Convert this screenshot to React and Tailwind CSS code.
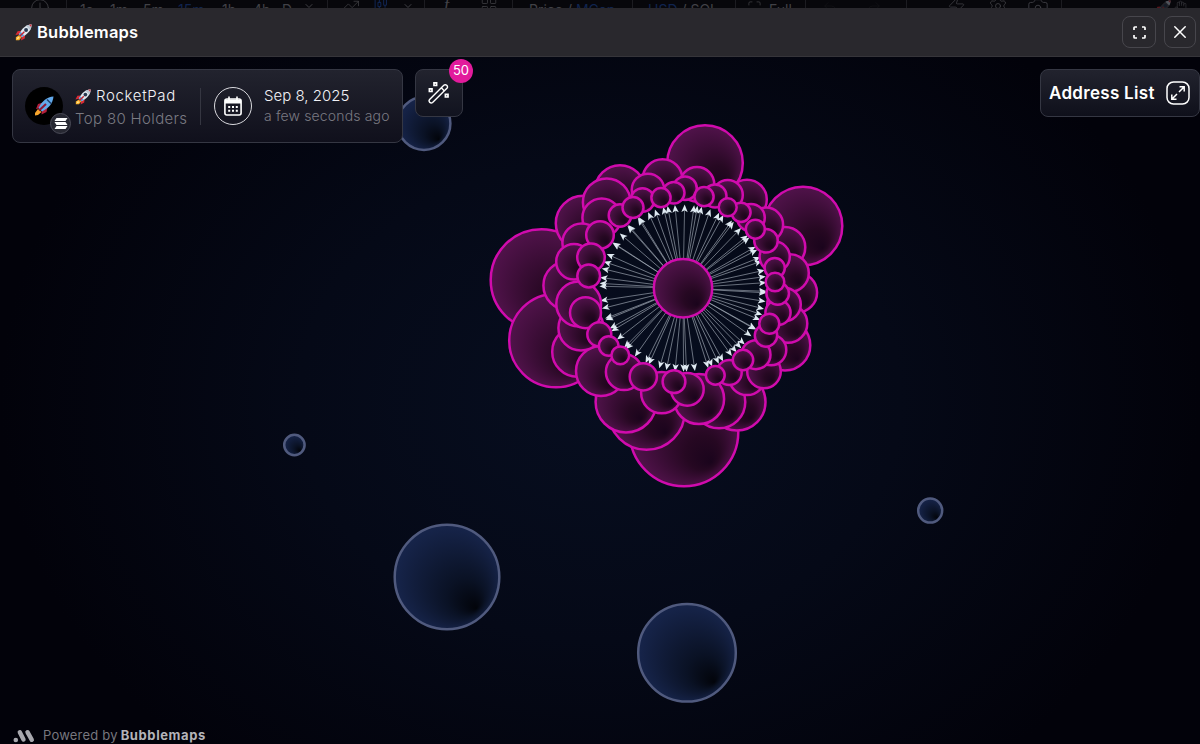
import React from "react";
import { Clock, ChevronDown, Undo2, Redo2, Settings, Camera, Zap, Maximize, LayoutGrid, ChartCandlestick, TrendingUp, Hand } from "lucide-react";

const HUB = { x: 683, y: 288.2, r: 29.2 };
const RING = 83.6;

// Each holder: [centre x, centre y, radius]
const HOLDERS = [
  [541.5, 280, 51], [556, 340.5, 47], [705, 163, 38], [803, 226, 39.5], [684, 432, 54.5],
  [620, 190, 25], [606.7, 202.3, 24], [583.3, 223.3, 27.7], [601.7, 217.7, 19.5], [600, 235, 14],
  [620, 215.5, 11.5], [633, 207.5, 10.7], [642.5, 200, 12], [648, 190, 16.5], [662.5, 179, 20],
  [661, 197.7, 9.8], [673.7, 192.7, 11], [685, 188.3, 12], [697, 184.3, 17.5], [704, 196.7, 9.8],
  [715, 196, 11.7], [727.7, 195, 15.3], [747, 199.5, 20], [727.7, 207.2, 9.2], [741, 212.3, 9.8],
  [751, 217.7, 14], [766, 224.7, 17.3], [755.3, 229.2, 9.7], [766, 240.7, 12], [785, 247.3, 20.5],
  [774.7, 256.7, 15.3], [790, 273, 19], [774.7, 268, 10.3], [775, 282, 9.5], [797, 292.5, 20.3],
  [777.7, 293.5, 11.5], [784, 304.5, 17], [778, 312.5, 12.8], [788, 323.5, 19.5], [785, 345.3, 25.5],
  [769.3, 323.7, 10.2], [766, 335.5, 11.4], [771, 350, 15.5], [756, 354.7, 14.7], [743, 360, 10.4],
  [764, 371.5, 17], [747, 377, 18.3], [729.3, 372.5, 12.6], [715.3, 375.3, 9.6], [737, 402, 28.7],
  [719, 402, 26.5], [699, 399, 25.3], [687.3, 389.3, 16.6], [674, 381.7, 11.6], [661.7, 392.7, 20.8],
  [643.3, 376.8, 13.8], [624, 372, 18.3], [601, 371, 25.2], [626, 402, 30.6], [646.5, 411.5, 38.5],
  [620.3, 355.3, 9.1], [608.7, 346, 10], [599.3, 334.3, 12.2], [585.5, 312.7, 15.7], [577.3, 351.7, 25.3],
  [581, 328, 22.8], [578.7, 304, 22.6], [568, 285.5, 24.8], [588.7, 276, 11.6], [591, 257.3, 14],
  [574, 261.7, 18], [581.7, 242.7, 19.5],
].sort((a, b) => b[2] - a[2]);

const LOOSE = [
  [424, 123.5, 26.8], [447, 577, 52.7], [687, 652.8, 49.2], [930.2, 510.6, 12.4], [294.4, 445, 10.6],
];

function BubbleGraph() {
  return (
    <svg className="absolute inset-0" width="1200" height="687" viewBox="0 57 1200 687">
      <defs>
        <radialGradient id="pink" cx=".5" cy=".5" r=".52" fx=".75" fy=".78">
          <stop offset="0" stopColor="#1a041c" />
          <stop offset=".3" stopColor="#260822" />
          <stop offset="1" stopColor="#52134c" />
        </radialGradient>
        <radialGradient id="blue" cx=".5" cy=".5" r=".52" fx=".78" fy=".8">
          <stop offset="0" stopColor="#02040a" />
          <stop offset=".35" stopColor="#0a1225" />
          <stop offset="1" stopColor="#17254c" />
        </radialGradient>
      </defs>
      {LOOSE.map(([x, y, r]) => (
        <circle key={x} cx={x} cy={y} r={r - 0.4} fill="url(#blue)" stroke="#505a7e" strokeWidth="2.5" />
      ))}
      {HOLDERS.map(([x, y], i) => {
        const deg = (Math.atan2(y - HUB.y, x - HUB.x) * 180) / Math.PI;
        return (
          <g key={i} transform={`translate(${HUB.x} ${HUB.y}) rotate(${deg})`}>
            <line x1="28" y1="0" x2={RING - 5} y2="0" stroke="#b0b9c4" strokeOpacity=".65" strokeWidth=".85" />
            <path d={`M${RING} 0 l-7.500 -3.200 l1.800 3.200 l-1.800 3.200z`} fill="#dfeaf2" />
          </g>
        );
      })}
      {HOLDERS.map(([x, y, r], i) => (
        <circle key={i} cx={x} cy={y} r={r - 0.2} fill="url(#pink)" stroke="#d00bad" strokeWidth="2.5" />
      ))}
      <circle cx={HUB.x} cy={HUB.y} r={HUB.r} fill="url(#pink)" stroke="#d00bad" strokeWidth="2.500" />
    </svg>
  );
}

function Rocket({ className, body = "#dfe7ee" }) {
  return (
    <svg className={className} viewBox="0 0 20 20">
      <path d="M7 8 3 8.5.5 13 6 12z" fill="#d92b35" />
      <path d="M12 13 11.5 17 7 19.5 8 14z" fill="#d92b35" />
      <path d="M5 13 1 15.5 1 19 5 19 8 15z" fill="#f9b02c" />
      <path d="M3.5 15 2 18 5.5 16.5z" fill="#fff0a0" />
      <path d="M19.5.5C13 .5 8 5 4.800 12L8 15.200C15 12 19.500 7 19.500.5z" fill={body} />
      <path d="M19.500.5C16.500.5 14.500 1.200 13 2.200L17.800 7C19 5 19.500 3 19.500.5z" fill="#b9c6d2" />
      <path d="M19.500.5 16.500 1 19 3.500z" fill="#d92b35" />
      <path d="M4.800 12 6.500 9 11 13.500 8 15.200z" fill="#5b9fe0" />
      <circle cx="13" cy="7" r="2.300" fill="#28384f" />
      <path d="M5.500 14.500 11 9" stroke="#c4242f" strokeWidth="1.700" />
    </svg>
  );
}

function TokenRocket({ className }) {
  return (
    <svg className={className} viewBox="0 0 20 20">
      <path d="M9 6.500 4 8 2 13 7 12z" fill="#b51f3b" />
      <path d="M13.500 11 12.500 16 7.500 18.500 8 13z" fill="#b51f3b" />
      <path d="M4 13 1 17 1 19.500 4 19 7.500 16z" fill="#f7a52c" />
      <path d="M19.500.5C13 1 8 5 4.500 12L8 15.500C15 12 19 7 19.500.5z" fill="#62a9ea" />
      <path d="M13 3.500 17 7.500" stroke="#1f3d66" strokeWidth="1.500" />
      <path d="M5 14.500 12 8" stroke="#8f1736" strokeWidth="2" />
    </svg>
  );
}

function Sep() {
  return <span className="block h-4 w-px bg-[#1c1c21]" />;
}

// Toolbar cells, each with the width up to the next one
const TOOLS = [
  ["w-[36px]", <Clock size={20} strokeWidth={1} className="-mt-0.5" />],
  ["w-[14px]", <Sep />],
  ["w-[30px]", "1s"],
  ["w-[33px]", "1m"],
  ["w-[35px]", "5m"],
  ["w-[44px] text-[#10244f]", "15m"],
  ["w-[31px]", "1h"],
  ["w-[29px]", "4h"],
  ["w-[21px]", "D"],
  ["w-[24px]", <ChevronDown size={12} />],
  ["w-[15px]", <Sep />],
  ["w-[31px]", <TrendingUp size={18} strokeWidth={1} className="-mt-1" />],
  ["w-[29px] text-[#10244f]", <ChartCandlestick size={17} strokeWidth={1.500} className="-mt-1" />],
  ["w-[22px]", <ChevronDown size={12} />],
  ["w-[20px]", <Sep />],
  ["w-[36px]", <span className="block -mt-1 font-['Liberation_Serif',serif] text-lg leading-[18px] italic">f</span>],
  ["w-[32px]", <LayoutGrid size={18} strokeWidth={1} className="-mt-1" />],
  ["w-[17px]", <Sep />],
  ["w-[103px]", <>Price / <span className="text-[#10244f]">MCap</span></>],
  ["w-[16px]", <Sep />],
  ["w-[87px]", <><span className="text-[#10244f]">USD</span> / SOL</>],
  ["w-[12px]", <Sep />],
  ["w-[22px]", <Maximize size={15} strokeWidth={1.200} />],
  ["w-[36px]", "Full"],
  ["w-[17px]", <Sep />],
  ["w-[44px] text-[#131317]", <Undo2 size={16} strokeWidth={1} />],
  ["w-[40px] text-[#131317]", <Redo2 size={16} strokeWidth={1} />],
  ["w-[41px]", <Sep />],
  ["w-[41px]", <Zap size={19} strokeWidth={1} className="-mt-1" />],
  ["w-[39px]", <Settings size={20} strokeWidth={1} className="-mt-1" />],
  ["w-[34px]", <Camera size={22} strokeWidth={1} className="-mt-1" />],
  ["w-[94px]", <Sep />],
  ["w-[19px]", <Rocket className="size-4 opacity-40" body="#4a4a50" />],
  ["w-[20px]", <Hand size={13} strokeWidth={1} />],
];

function Toolbar() {
  return (
    <div className="flex h-2 shrink-0 items-start overflow-hidden bg-[#07070b] pl-[30px] text-[#414146]">
      {TOOLS.map(([cls, item], i) => (
        <div key={i} className={`${cls} h-4 shrink-0 whitespace-nowrap text-sm leading-[19px]`}>{item}</div>
      ))}
    </div>
  );
}

function Header() {
  return (
    <header className="flex h-[49px] shrink-0 items-center border-b border-[#36353a] bg-[#29282d] pr-1 pl-[15px]">
      <Rocket className="size-[17px]" />
      <h1 className="ml-[5px] text-[16.500px] font-semibold tracking-[0.2px] text-white">Bubblemaps</h1>
      <div className="ml-auto flex gap-2">
        <button className="flex h-8 w-[34px] items-center justify-center rounded-lg border border-[#47464c] text-white">
          <svg className="size-[13px]" viewBox="0 0 13 13" fill="none" stroke="currentColor" strokeWidth="1.700">
            <path d="M1 4V1.800Q1 1 1.800 1H4M9 1h2.200Q12 1 12 1.800V4M12 9v2.200q0 .8-.8.8H9M4 12H1.800Q1 12 1 11.200V9" />
          </svg>
        </button>
        <button className="flex size-8 items-center justify-center rounded-lg border border-[#47464c] text-white">
          <svg className="size-3" viewBox="0 0 12 12" fill="none" stroke="currentColor" strokeWidth="1.500" strokeLinecap="round">
            <path d="M.8.8 11.200 11.200M11.200.8.8 11.200" />
          </svg>
        </button>
      </div>
    </header>
  );
}

function TokenCard() {
  return (
    <section className="flex h-[74px] w-[391px] shrink-0 items-center rounded-lg border border-[#353743] bg-linear-to-b from-[#22232e] to-[#10101c] pl-3">
      <div className="relative size-[38px] shrink-0 rounded-full bg-black">
        <TokenRocket className="absolute top-[9px] left-[9px] size-5" />
        <span className="absolute top-[26px] left-[25px] flex size-[21px] items-center justify-center rounded-full border border-[#4a4b57] bg-[#272832]">
          <svg className="h-[11px] w-[14px]" viewBox="0 0 14 11" fill="#fff">
            <path d="M2.500 0H13.500L11.500 3H.5zM.5 4H11.500L13.500 7H2.500zM2.500 8H13.500L11.500 11H.5z" />
          </svg>
        </span>
      </div>
      <div className="ml-3 w-[125px] shrink-0 whitespace-nowrap pt-1">
        <div className="flex h-[23px] items-center text-[15px] font-light tracking-[0.65px] text-[#f2f2f6]">
          <Rocket className="mr-[5px] size-4" />
          RocketPad
        </div>
        <div className="h-[23px] text-[15px] leading-[22px] font-light tracking-[0.35px] text-[#7a7a82]">Top 80 Holders</div>
      </div>
      <div className="h-[37px] w-px shrink-0 bg-[#353641]" />
      <div className="ml-[13px] flex size-[38px] shrink-0 items-center justify-center rounded-full border border-[#d9d9de]">
        <svg className="h-5 w-[18px]" viewBox="0 0 18 20" fill="none" stroke="#fff" strokeWidth="1.600">
          <rect x=".9" y="3" width="16.200" height="16" rx="2" />
          <path d="M1 5.500H17" strokeWidth="4" />
          <path d="M5 .5V5M13 .5V5" />
          <path d="M4.200 11h2M8 11h2M11.800 11h2M4.200 14.800h2M8 14.800h2M11.800 14.800h2" strokeWidth="2" />
        </svg>
      </div>
      <div className="ml-3 whitespace-nowrap">
        <div className="h-5 text-[15px] leading-5 font-light text-[#f2f2f6]">Sep 8, 2025</div>
        <div className="h-5 text-[14px] leading-5 font-light tracking-[0.15px] text-[#7a7a82]">a few seconds ago</div>
      </div>
    </section>
  );
}

function WandButton() {
  return (
    <button className="relative ml-3 flex size-12 shrink-0 items-center justify-center rounded-lg border border-[#353743] bg-linear-to-b from-[#22232e] to-[#11131f]">
      <svg className="size-[22px]" viewBox="0 0 22 22" fill="none" stroke="#fff" strokeWidth="1.400">
        <path d="M1.600 17.500 15.800 3.300Q17.200 2 18.700 3.300 20.200 4.900 18.900 6.300L4.600 20.500Q3.200 21.600 1.800 20.400.4 18.900 1.600 17.500z" />
        <path d="M13.300 5.800 16.400 8.900" />
        <path d="M6 .9H8.600V3.500H6zM1.400 6.900H4V9.500H1.400zM17.400 12.400H20V15H17.400z" strokeWidth="1.700" />
      </svg>
      <span className="absolute -top-[11px] right-[-11px] flex size-6 items-center justify-center rounded-full bg-[#e21b9c] text-[13px] text-white">50</span>
    </button>
  );
}

function AddressButton() {
  return (
    <button className="ml-auto flex h-12 w-40 shrink-0 items-center rounded-lg border border-[#353743] bg-linear-to-b from-[#22232e] to-[#0f101b] pr-[9px] pl-2 text-white">
      <span className="pt-0.5 text-[17px] font-semibold tracking-[0.3px] whitespace-nowrap">Address List</span>
      <svg className="ml-auto size-6 shrink-0" viewBox="0 0 24 24" fill="none" stroke="currentColor" strokeWidth="1.500">
        <rect x="1" y="1" width="22" height="22" rx="6.500" />
        <path d="M13.500 5.800H18.200V10.500M18 6 13 11M10.500 18.200H5.800V13.500M6 18 11 13" />
      </svg>
    </button>
  );
}

export default function App() {
  return (
    <div className="flex h-[744px] w-[1200px] flex-col overflow-hidden bg-[#02020a] font-[Inter,sans-serif]">
      <Toolbar />
      <Header />
      <main className="relative flex flex-1 flex-col bg-[radial-gradient(ellipse_600px_480px_at_600px_343px,#070e20_0%,#050917_50%,#02020a_100%)]">
        <BubbleGraph />
        <div className="relative flex items-start pt-3 pl-3">
          <TokenCard />
          <WandButton />
          <AddressButton />
        </div>
        <footer className="relative mt-auto flex h-[17px] items-center pl-[13px] text-[13px] whitespace-nowrap text-[#77777e]">
          <svg className="mr-2 h-[14px] w-[22px]" viewBox="0 0 22 14" fill="none" stroke="#a8a8ae" strokeWidth="4.400" strokeLinecap="round">
            <path d="M6.800 3.200 10.500 10.500M14.500 3.200 18.800 10.800" />
            <circle cx="2.800" cy="11" r="2.300" fill="#a8a8ae" stroke="none" />
          </svg>
          <span className="tracking-[0.2px]">Powered by</span>
          <b className="ml-[3px] font-bold tracking-[0.600px] text-[#b4b4b9]">Bubblemaps</b>
        </footer>
      </main>
    </div>
  );
}
